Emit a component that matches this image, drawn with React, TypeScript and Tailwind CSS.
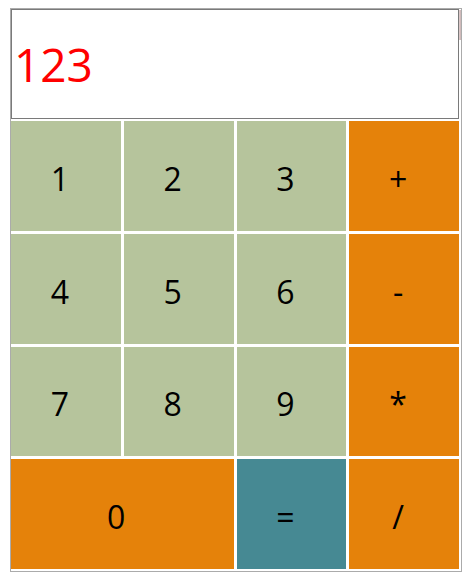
import React from 'react';

type Key = { label: string; tone: 'num' | 'op' | 'eq'; wide?: boolean };

const keys: Key[] = [
    { label: '1', tone: 'num' },
    { label: '2', tone: 'num' },
    { label: '3', tone: 'num' },
    { label: '+', tone: 'op' },
    { label: '4', tone: 'num' },
    { label: '5', tone: 'num' },
    { label: '6', tone: 'num' },
    { label: '-', tone: 'op' },
    { label: '7', tone: 'num' },
    { label: '8', tone: 'num' },
    { label: '9', tone: 'num' },
    { label: '*', tone: 'op' },
    { label: '0', tone: 'op', wide: true },
    { label: '=', tone: 'eq' },
    { label: '/', tone: 'op' },
];

const toneClass = {
    num: 'bg-[#b6c49c]',
    op: 'bg-[#e5820a]',
    eq: 'bg-[#468993]',
};

export default function App() {
    return (
        <div className="pt-[8px] pl-[10px] bg-white min-h-screen" style={{ fontFamily: '"Open Sans", sans-serif' }}>
            <div className="relative w-[452px] border border-[#ababab] pr-[2px] pb-[2px]">
                {/* display */}
                <div className="h-[110px] border border-[#7a7a7a] flex items-center pl-[2px] text-[46px] leading-none text-[#ff0000]">
                    123
                </div>
                {/* keypad */}
                <div className="mt-[2px] grid grid-cols-4 grid-rows-4 gap-[3px] h-[448px]">
                    {keys.map((k) => (
                        <button
                            key={k.label}
                            className={`${toneClass[k.tone]} ${k.wide ? 'col-span-2' : ''} flex items-center justify-center pr-[12px] pt-[6px] text-[32px] leading-none text-black`}
                        >
                            {k.label}
                        </button>
                    ))}
                </div>
                {/* scroll thumb remnant */}
                <div className="absolute left-[448px] top-[1px] w-[2px] h-[30px] bg-gradient-to-r from-[#e3cfcf] to-[#c9b3b3]" />
            </div>
        </div>
    );
}
